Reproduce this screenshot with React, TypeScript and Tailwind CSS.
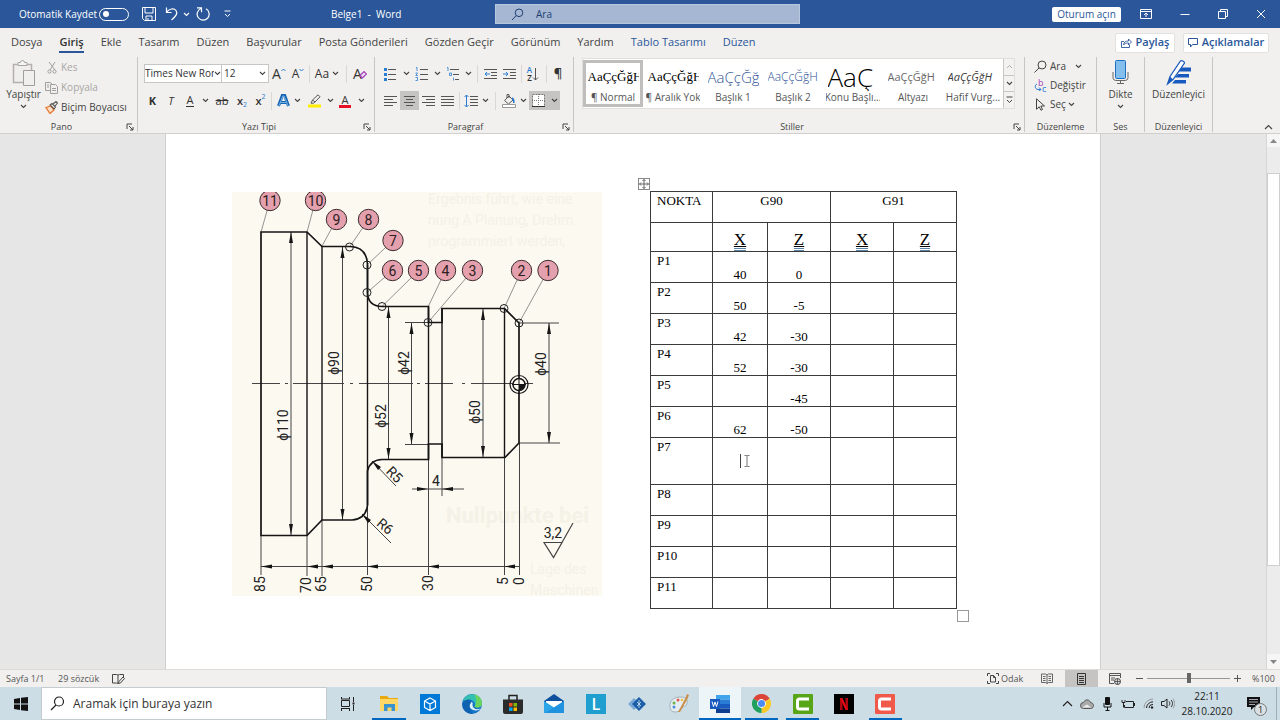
import type { ReactNode } from 'react';

const UI = "font-['Open_Sans','Noto_Sans',sans-serif]";

function Svg({ w, h, children, className = '' }: { w: number; h: number; children: ReactNode; className?: string }) {
  return (
    <svg width={w} height={h} viewBox={`0 0 ${w} ${h}`} fill="none" aria-hidden="true" className={`shrink-0 ${className}`}>
      {children}
    </svg>
  );
}

function Chevron({ color = '#444' }: { color?: string }) {
  return (
    <Svg w={7} h={5}>
      <path d="M1 1l2.500 2.500L6 1" stroke={color} strokeWidth="1.100" />
    </Svg>
  );
}

function Tool({ label, width, children, active = false }: { label: string; width: string; children: ReactNode; active?: boolean }) {
  return (
    <button
      type="button"
      aria-label={label}
      className={`flex h-[19px] shrink-0 items-center justify-center leading-none text-[#333] ${width} ${active ? 'bg-[#c6c4c2]' : ''}`}
    >
      {children}
    </button>
  );
}

function Sep({ width }: { width: string }) {
  return (
    <span className={`flex shrink-0 justify-center ${width}`}>
      <span className="h-[18px] w-px bg-[#dad8d6]" />
    </span>
  );
}

function Launcher({ label }: { label: string }) {
  return (
    <button type="button" aria-label={label} className="absolute right-[3px] bottom-px">
      <Svg w={8} h={8}>
        <path d="M1 6V1h5M3 3l4 4M7 4v3H4" stroke="#444" />
      </Svg>
    </button>
  );
}

function Group({ name, width, launcher = false, children }: { name: string; width: string; launcher?: boolean; children: ReactNode }) {
  return (
    <section aria-label={name} className={`relative flex h-[75px] shrink-0 flex-col border-r border-[#c8c6c4] ${width}`}>
      <div className="h-[65px] shrink-0">{children}</div>
      <div className="h-[10px] shrink-0 text-center text-[9px] leading-[10px] whitespace-nowrap text-[#444]">{name}</div>
      {launcher && <Launcher label={`${name} ayarları`} />}
    </section>
  );
}

function TitleBar() {
  return (
    <header className="flex h-7 shrink-0 items-center bg-[#2b579a] text-[10px] text-white">
      <div className="flex w-[331px] shrink-0 items-center pl-[19px]">
        <label className="flex w-[110px] items-center justify-between whitespace-nowrap">
          Otomatik Kaydet
          <input type="checkbox" className="peer sr-only" />
          <span className="flex h-[13px] w-[30px] items-center rounded-full border border-white pl-[3px]">
            <span className="size-[6px] rounded-full bg-white" />
          </span>
        </label>
        <button type="button" aria-label="Kaydet" className="ml-[13px]">
          <Svg w={14} h={14}>
            <path d="M.5 .5h13v13h-11l-2-2zM3 .5v5.500h8V.5M4 13.500V9h6v4.500M6 11v2.500" stroke="#fff" />
          </Svg>
        </button>
        <button type="button" aria-label="Geri Al" className="ml-[9px]">
          <Svg w={14} h={14}>
            <path d="M1.500 .5v5h5M1.500 5.500C4 1.500 9 .8 11 3.500c2 3 0 5.500-4.500 9.500" stroke="#fff" strokeWidth="1.200" />
          </Svg>
        </button>
        <span className="ml-[4px]"><Chevron color="#fff" /></span>
        <button type="button" aria-label="Yinele" className="ml-[6px]">
          <Svg w={15} h={14}>
            <path d="M1 .8h4.500v4.500M5 1.500a6 6 0 1 0 5 .3" stroke="#fff" strokeWidth="1.200" />
          </Svg>
        </button>
        <button type="button" aria-label="Hızlı Erişim Araç Çubuğunu Özelleştir" className="ml-[13px]">
          <Svg w={7} h={8}>
            <path d="M.5 1h6M1 4l2.500 2.500L6 4" stroke="#fff" />
          </Svg>
        </button>
      </div>
      <h1 className="w-[164px] shrink-0 whitespace-pre">Belge1  -  Word</h1>
      <label className="flex h-5 w-[305px] items-center border border-[#b7c7de] bg-[#a5b7d3] pl-[15px] text-[#1e3f73]">
        <Svg w={13} h={13}>
          <circle cx="8" cy="4.800" r="3.800" stroke="#1e3f73" />
          <path d="M5.300 7.500L1 12" stroke="#1e3f73" />
        </Svg>
        <input aria-label="Ara" placeholder="Ara" className="ml-3 w-full bg-transparent placeholder:text-[#1e3f73] outline-none" />
      </label>
      <div className="flex flex-1 items-center justify-end pr-[14px]">
        <button type="button" className="h-[15px] w-[69px] rounded-xs bg-white text-[10px] leading-[14px] text-[#2b579a]">Oturum açın</button>
        <button type="button" aria-label="Şerit Görüntüleme Seçenekleri" className="ml-[19px]">
          <Svg w={12} h={10}>
            <path d="M.5 .5h11v9H.500zM.5 2.500h11M6 8V4.500M4 6l2-2 2 2" stroke="#fff" />
          </Svg>
        </button>
        <button type="button" aria-label="Simge Durumuna Küçült" className="ml-7">
          <Svg w={10} h={10}><path d="M.5 5.500h9" stroke="#fff" /></Svg>
        </button>
        <button type="button" aria-label="Geri Yükle" className="ml-7">
          <Svg w={10} h={10}><path d="M.5 2.500h7v7h-7zM2.500 2.500v-2h7v7h-2" stroke="#fff" /></Svg>
        </button>
        <button type="button" aria-label="Kapat" className="ml-7">
          <Svg w={10} h={10}><path d="M1 1l8 8M9 1L1 9" stroke="#fff" /></Svg>
        </button>
      </div>
    </header>
  );
}

const tabs = ['Dosya', 'Giriş', 'Ekle', 'Tasarım', 'Düzen', 'Başvurular', 'Posta Gönderileri', 'Gözden Geçir', 'Görünüm', 'Yardım', 'Tablo Tasarımı', 'Düzen'];

function Tabs() {
  return (
    <nav className="flex h-[29px] shrink-0 items-center gap-[17px] pr-[11px] pl-[11px] text-[11px] text-[#444]">
      {tabs.map((t, i) => (
        <button
          key={i}
          type="button"
          className={
            'h-[21px] border-b-2 leading-[18px] whitespace-nowrap ' +
            (i === 1 ? 'border-[#2b579a] font-semibold text-[#333]' : i > 9 ? 'border-transparent text-[#2b579a]' : 'border-transparent')
          }
        >
          {t}
        </button>
      ))}
      <div className="ml-auto flex gap-2 font-semibold text-[#2b579a]">
        <button type="button" className="flex h-5 w-[60px] items-center justify-center gap-1 rounded-xs border border-[#e3e1df] bg-white">
          <Svg w={11} h={10}>
            <path d="M3 3.500H.500v6h8V7M2.500 7c.500-3 2-4 5-4V1l3 3-3 3V5c-2.500 0-4 .5-5 2z" stroke="#2b579a" strokeWidth=".9" />
          </Svg>
          Paylaş
        </button>
        <button type="button" className="flex h-5 w-[86px] items-center justify-center gap-1 rounded-xs border border-[#e3e1df] bg-white">
          <Svg w={10} h={10}>
            <path d="M.5 .5h9v6H4.500l-2 2.500V6.500h-2z" stroke="#2b579a" />
          </Svg>
          Açıklamalar
        </button>
      </div>
    </nav>
  );
}

function Clipboard() {
  return (
    <Group name="Pano" width="w-[138px] pr-[14px]" launcher>
      <div className="flex">
        <button type="button" className="flex w-[47px] shrink-0 flex-col items-center pt-[3px] text-[10px] text-[#444]">
          <Svg w={24} h={27}>
            <path d="M1.500 4.500h18v18h-18z" stroke="#b3b0ad" strokeWidth="1.500" fill="#efeeec" />
            <path d="M6 5.500h9v-3h-2.500a2 2 0 0 0-4 0H6z" fill="#f5f4f2" stroke="#a8a6a4" />
            <path d="M11.500 10.500h11v15h-11z" fill="#f1efed" stroke="#a19f9d" />
          </Svg>
          <span className="leading-[14px]">Yapıştır</span>
          <span className="mt-[3px]"><Chevron /></span>
        </button>
        <div className="text-[10px] whitespace-nowrap text-[#a8a6a4]">
          <button type="button" className="flex h-5 items-center">
            <Svg w={14} h={13}>
              <path d="M2 1l6 8M8 1L3 9" stroke="#a19f9d" />
              <circle cx="2.500" cy="10.500" r="1.600" stroke="#a19f9d" />
              <circle cx="7.500" cy="10.500" r="1.600" stroke="#a19f9d" />
            </Svg>
            Kes
          </button>
          <button type="button" className="flex h-5 items-center">
            <Svg w={13} h={13} className="-ml-[2px] mr-[3px]">
              <path d="M5 9.500H.500v-8h5l1.500 1.500M5.500 3.500h5l2 2v7h-7zM7 7.500h4M7 9.500h4M2 4h2M2 6h2" stroke="#a19f9d" />
            </Svg>
            Kopyala
          </button>
          <button type="button" className="flex h-5 items-center text-[#444]">
            <Svg w={13} h={13} className="-ml-[2px] mr-[3px]">
              <path d="M1 6.500l5-1.500 3 4-4 3.500z" stroke="#e8762d" strokeWidth="1.300" fill="#fbe0c8" />
              <path d="M5 4l2-1.500L10.500 6 9 8zM8 3l3-2.500 1.500 1.500L10 5" stroke="#555" strokeWidth="1.100" />
            </Svg>
            Biçim Boyacısı
          </button>
        </div>
      </div>
    </Group>
  );
}

function FontGroup() {
  return (
    <Group name="Yazı Tipi" width="w-[237px] pl-[6px]" launcher>
      <div className="flex h-[30px] items-center pt-[3px]">
        <span className="flex h-[19px] w-[78px] shrink-0 items-center border border-[#c8c6c4] bg-white pr-[2px]">
          <select aria-label="Yazı tipi" className="w-[69px] appearance-none overflow-hidden text-[10px] text-[#333] outline-none">
            <option>Times New Roman</option>
          </select>
          <Chevron />
        </span>
        <span className="-ml-px flex h-[19px] w-[48px] shrink-0 items-center border border-[#c8c6c4] bg-white pr-[2px] pl-[2px]">
          <select aria-label="Yazı tipi boyutu" className="w-[37px] appearance-none text-[10px] text-[#333] outline-none">
            <option>12</option>
          </select>
          <Chevron />
        </span>
        <Tool label="Yazı tipini büyüt" width="w-5">
          <span className="text-[14px]">A</span>
          <Svg w={5} h={12}><path d="M.5 3l2-2 2 2" stroke="#2b7cd3" /></Svg>
        </Tool>
        <Tool label="Yazı tipini küçült" width="w-[18px]">
          <span className="text-[12px]">A</span>
          <Svg w={5} h={12}><path d="M.5 1l2 2 2-2" stroke="#2b7cd3" /></Svg>
        </Tool>
        <Sep width="w-1" />
        <Tool label="Büyük küçük harf" width="w-[32px]">
          <span className="mr-[3px] text-[12px]">Aa</span>
          <Chevron />
        </Tool>
        <Sep width="w-[6px]" />
        <Tool label="Biçimlendirmeyi temizle" width="w-[22px]">
          <span className="text-[14px]">A</span>
          <Svg w={8} h={13} className="-ml-[3px]">
            <path d="M1 8.500l4-4 2.500 2.500-4 4z" stroke="#a33fb5" strokeWidth="1.200" fill="#f0dcf4" />
          </Svg>
        </Tool>
      </div>
      <div className="flex h-[27px] items-center">
        <Tool label="Kalın" width="w-[17px]"><span className="text-[11px] font-bold">K</span></Tool>
        <Tool label="İtalik" width="w-5"><span className="text-[11px] italic">T</span></Tool>
        <Tool label="Altı çizili" width="w-[18px]"><span className="border-b border-[#333] px-px text-[11px] leading-[12px]">A</span></Tool>
        <Tool label="Altı çizili seçenekleri" width="w-3"><Chevron /></Tool>
        <Tool label="Üstü çizili" width="w-[22px]"><span className="text-[11px] line-through">ab</span></Tool>
        <Tool label="Alt simge" width="w-[18px]">
          <span className="text-[11px] font-semibold">x</span><span className="pt-2 text-[7px] text-[#2b7cd3]">2</span>
        </Tool>
        <Tool label="Üst simge" width="w-[19px]">
          <span className="text-[11px] font-semibold">x</span><span className="pb-2 text-[7px] text-[#2b7cd3]">2</span>
        </Tool>
        <Sep width="w-[3px]" />
        <Tool label="Metin efektleri" width="w-5">
          <Svg w={13} h={13}>
            <path d="M1.500 12L5.300 1.500h2.400L11.500 12M3.500 8.500h6" stroke="#1464b4" strokeWidth="3" />
            <path d="M1.800 12L5.900 2h1.200l4.100 10M3.500 8.500h6" stroke="#9fd0f5" strokeWidth=".7" />
          </Svg>
        </Tool>
        <Tool label="Metin efekti seçenekleri" width="w-2"><Chevron /></Tool>
        <Tool label="Vurgu rengi" width="w-[26px]">
          <Svg w={13} h={14}>
            <path d="M4.500 6L10 .8l2 2L7 8zM4.500 6L3 9.200h2.500L7 8" stroke="#555" />
            <path d="M0 10.500h13v3H0z" fill="#ffee00" />
          </Svg>
        </Tool>
        <Tool label="Vurgu seçenekleri" width="w-[6px]"><Chevron /></Tool>
        <Tool label="Yazı tipi rengi" width="w-6">
          <span className="border-b-[3px] border-[#e81123] px-[3px] text-[11px] leading-[11px]">A</span>
        </Tool>
        <Tool label="Yazı rengi seçenekleri" width="w-2"><Chevron /></Tool>
      </div>
    </Group>
  );
}

function Paragraph() {
  const g = '#555';
  const b = '#2b7cd3';
  return (
    <Group name="Paragraf" width="w-[199px] pl-[5px] pr-[22px]" launcher>
      <div className="flex h-[30px] items-center pt-[3px]">
        <Tool label="Madde işaretleri" width="w-5">
          <Svg w={14} h={14}><path d="M5 2.500h8M5 7.500h8M5 12.500h8" stroke={g} /><path d="M1 1h3v3H1zM1 6h3v3H1zM1 11h3v3H1z" fill={b} /></Svg>
        </Tool>
        <Tool label="Madde seçenekleri" width="w-3"><Chevron /></Tool>
        <Tool label="Numaralandırma" width="w-5">
          <Svg w={14} h={14}><path d="M5 2.500h8M5 7.500h8M5 12.500h8" stroke={g} /><path d="M1 .5h1V4M.5 6h2L.800 8.500H3M.5 10.500h2v3h-2" stroke={b} strokeWidth=".8" /></Svg>
        </Tool>
        <Tool label="Numara seçenekleri" width="w-[10px]"><Chevron /></Tool>
        <Tool label="Çok düzeyli liste" width="w-[22px]">
          <Svg w={14} h={14}><path d="M4 2.500h9M7 7.500h6M9 12.500h4" stroke={g} /><path d="M1 .5h1V4M3.500 6h2v2.500h-2zM7.500 10.500v3" stroke={b} strokeWidth=".8" /></Svg>
        </Tool>
        <Tool label="Liste seçenekleri" width="w-2"><Chevron /></Tool>
        <Sep width="w-[10px]" />
        <Tool label="Girintiyi azalt" width="w-4">
          <Svg w={13} h={12}><path d="M0 1.500h13M7 4.500h6M7 7.500h6M0 10.500h13" stroke={g} /><path d="M6 6H1M3 4L1 6l2 2" stroke={b} /></Svg>
        </Tool>
        <Tool label="Girintiyi artır" width="w-[22px]">
          <Svg w={13} h={12}><path d="M0 1.500h13M7 4.500h6M7 7.500h6M0 10.500h13" stroke={g} /><path d="M0 6h5M3 4l2 2-2 2" stroke={b} /></Svg>
        </Tool>
        <Sep width="w-[2px]" />
        <Tool label="Sırala" width="w-[22px]">
          <span className="flex flex-col text-[8px] leading-[8px] font-semibold"><span className="text-[#2b7cd3]">A</span><span>Z</span></span>
          <Svg w={7} h={14}><path d="M3.500 1v12M1 10.500L3.500 13 6 10.500" stroke={g} /></Svg>
        </Tool>
        <Sep width="w-1" />
        <Tool label="Paragraf işaretleri" width="w-5"><span className="text-[13px] font-semibold">¶</span></Tool>
      </div>
      <div className="flex h-[27px] items-center pl-px">
        <Tool label="Sola hizala" width="w-[19px]"><Svg w={13} h={12}><path d="M0 1.500h13M0 4.500h9M0 7.500h13M0 10.500h9" stroke={g} /></Svg></Tool>
        <Tool label="Ortala" width="w-[19px]" active><Svg w={13} h={12}><path d="M1 1.500h11M3 4.500h7M1 7.500h11M3 10.500h7" stroke={g} /></Svg></Tool>
        <Tool label="Sağa hizala" width="w-[19px]"><Svg w={13} h={12}><path d="M0 1.500h13M4 4.500h9M0 7.500h13M4 10.500h9" stroke={g} /></Svg></Tool>
        <Tool label="İki yana yasla" width="w-[19px]"><Svg w={13} h={12}><path d="M0 1.500h13M0 4.500h13M0 7.500h13M0 10.500h13" stroke={g} /></Svg></Tool>
        <Sep width="w-1" />
        <Tool label="Satır aralığı" width="w-5">
          <Svg w={14} h={14}><path d="M6 2.500h8M6 5.500h8M6 8.500h8M6 11.500h8" stroke={g} /><path d="M2.500 1v12M.5 3l2-2 2 2M.5 11l2 2 2-2" stroke={b} /></Svg>
        </Tool>
        <Tool label="Aralık seçenekleri" width="w-2"><Chevron /></Tool>
        <Sep width="w-3" />
        <Tool label="Gölgelendirme" width="w-4">
          <Svg w={14} h={14}><path d="M2.500 6.500L7 2l4 4-4.500 4zM5 4V.5h2V4" stroke={g} /><path d="M10 4c2 1 2 3 1.800 5" stroke={b} strokeWidth="1.500" /><path d="M.5 10.500h13v3H.500z" fill="#fff" stroke="#999" /></Svg>
        </Tool>
        <Tool label="Gölgelendirme seçenekleri" width="w-3"><Chevron /></Tool>
        <Tool label="Kenarlıklar" width="w-[31px]" active>
          <Svg w={13} h={13} className="mr-[6px]"><path d="M.5 .5h12v12H.500z" fill="#fff" stroke="#777" strokeDasharray="2 1" /><path d="M6.500 0v13M0 6.500h13" stroke="#777" strokeDasharray="1 1" /><path d="M0 12.500h13" stroke="#333" /></Svg>
          <Chevron />
        </Tool>
      </div>
    </Group>
  );
}

const styles = [
  { name: '¶ Normal', sample: 'AaÇçĞğH', cls: "font-['Liberation_Serif',serif] text-[13px] text-black" },
  { name: '¶ Aralık Yok', sample: 'AaÇçĞğH', cls: "font-['Liberation_Serif',serif] text-[13px] text-black" },
  { name: 'Başlık 1', sample: 'AaÇçĞğ', cls: 'font-light text-[15px] text-[#2f5496]' },
  { name: 'Başlık 2', sample: 'AaÇçĞğH', cls: 'font-light text-[12px] text-[#2f5496]' },
  { name: 'Konu Başlı...', sample: 'AaÇ', cls: 'font-light text-[26px] leading-[28px] text-black' },
  { name: 'Altyazı', sample: 'AaÇçĞğH', cls: 'text-[11px] text-[#6a6a6a]' },
  { name: 'Hafif Vurg...', sample: 'AaÇçĞğH', cls: 'text-[11px] italic text-[#404040]' },
];

function Styles() {
  return (
    <Group name="Stiller" width="w-[451px] pl-[8px] pr-[22px]" launcher>
      <div className="pt-px">
        <div className="flex h-[51px] w-[433px] border border-[#e1dfdd] bg-white">
          {styles.map((s, i) => (
            <button
              key={s.name}
              type="button"
              className={`mt-px flex h-[47px] w-[60px] shrink-0 flex-col overflow-hidden border-[3px] ${i === 0 ? 'border-[#c0bebc]' : 'border-transparent'}`}
            >
              <span className={`flex h-[28px] w-[51px] items-center self-center overflow-hidden whitespace-nowrap ${s.cls}`}>{s.sample}</span>
              <span className="-mx-1 self-center text-[10px] leading-[12px] whitespace-nowrap text-[#555]">{s.name}</span>
            </button>
          ))}
          <div className="flex flex-1 flex-col divide-y divide-[#c8c6c4] border-l border-[#c8c6c4] bg-[#f3f2f1]">
            <button type="button" aria-label="Yukarı" className="flex flex-1 items-center justify-center">
              <Svg w={7} h={5}><path d="M1 4l2.500-2.500L6 4" stroke="#b0aeac" /></Svg>
            </button>
            <button type="button" aria-label="Aşağı" className="flex flex-1 items-center justify-center"><Chevron /></button>
            <button type="button" aria-label="Diğer" className="flex flex-1 items-center justify-center">
              <Svg w={7} h={8}><path d="M.5 1h6M1 4l2.500 2.500L6 4" stroke="#444" /></Svg>
            </button>
          </div>
        </div>
      </div>
    </Group>
  );
}

function Ribbon() {
  return (
    <div className="flex h-[77px] shrink-0 border-b border-[#d2d0ce] text-[#444]">
      <Clipboard />
      <FontGroup />
      <Paragraph />
      <Styles />
      <Group name="Düzenleme" width="w-[72px]">
        <div className="text-[10px]">
          <button type="button" className="flex h-[19px] items-center pl-[9px]">
            <Svg w={13} h={13} className="mr-[3px]"><circle cx="8" cy="5" r="4" stroke="#444" /><path d="M5 8l-4.500 4.500" stroke="#444" /></Svg>
            <span className="mr-2 w-[17px] text-left">Ara</span><Chevron />
          </button>
          <button type="button" className="flex h-[19px] items-center pl-[9px]">
            <span className="relative mr-[3px] h-[14px] w-[13px] text-[9px] leading-none">
              <span className="absolute -top-px left-1 text-[#a33fb5]">b</span>
              <span className="absolute top-[5px] left-2 text-[#2b7cd3]">c</span>
              <Svg w={8} h={12}><path d="M3 5C.5 6 .5 10 4 10.500h3M5 8.500l2 2-2 1.500" stroke="#2b7cd3" /></Svg>
            </span>
            Değiştir
          </button>
          <button type="button" className="flex h-[19px] items-center pl-[9px]">
            <Svg w={13} h={13} className="mr-[3px]"><path d="M2.500 .8v10.500l2.700-2.500 1.800 3.500 1.500-.8L6.800 8h3.700z" stroke="#444" /></Svg>
            <span className="mr-[2px]">Seç</span><Chevron />
          </button>
        </div>
      </Group>
      <Group name="Ses" width="w-[48px]">
        <button type="button" className="flex w-full flex-col items-center pt-[3px] text-[10px]">
          <Svg w={17} h={27}>
            <rect x="3.500" y=".5" width="10" height="18" rx="1" fill="#83beec" stroke="#1e6fc0" />
            <path d="M1 12v5.500c0 2.500 1.500 3 4 3h7c2.500 0 4-.5 4-3V12M8.500 20.500v3M5 23.500h7" stroke="#666" />
          </Svg>
          <span className="leading-[14px]">Dikte</span>
          <span className="mt-[3px]"><Chevron /></span>
        </button>
      </Group>
      <Group name="Düzenleyici" width="w-[68px]">
        <button type="button" className="flex w-full flex-col items-center pt-[3px] text-[10px]">
          <Svg w={26} h={27}>
            <path d="M16 7.500h9v4H12zM12 14h11v3.500H9zM9 20h11v3.500H6z" fill="#185abd" />
            <path d="M1.500 24L4 16.500 14.500 1c1-1 4 .5 4 2L7 19.500z" fill="#fff" stroke="#185abd" strokeWidth="1.200" />
            <path d="M4 16.500l3 3L1.500 24z" fill="#185abd" />
          </Svg>
          <span className="leading-[14px]">Düzenleyici</span>
        </button>
      </Group>
      <button type="button" aria-label="Şeridi Daralt" className="mt-auto mr-[7px] mb-[3px] ml-auto">
        <Svg w={9} h={6}><path d="M1 5l3.500-3.500L8 5" stroke="#444" strokeWidth="1.200" /></Svg>
      </button>
    </div>
  );
}

const balloons = [
  { n: 11, x: 270, y: 200.5, tx: 261, ty: 232 },
  { n: 10, x: 315.5, y: 200.5, tx: 307, ty: 232 },
  { n: 9, x: 336.5, y: 219.5, tx: 322, ty: 246 },
  { n: 8, x: 368.5, y: 219.5, tx: 349.5, ty: 247 },
  { n: 7, x: 393, y: 240.5, tx: 367, ty: 265 },
  { n: 6, x: 392.5, y: 270.5, tx: 367, ty: 292.5 },
  { n: 5, x: 418.5, y: 270.5, tx: 382, ty: 306.5 },
  { n: 4, x: 445.5, y: 270.5, tx: 428, ty: 307 },
  { n: 3, x: 472.5, y: 270.5, tx: 428, ty: 322.5 },
  { n: 2, x: 521.5, y: 270.5, tx: 504, ty: 308.5 },
  { n: 1, x: 548, y: 270.5, tx: 519, ty: 323 },
];

const rings = [[349.5, 247], [367, 265], [367, 292.5], [382, 306.5], [428, 322.5], [504, 308.5], [519, 323]];

const verticals = [
  { x: 291, a: 232, b: 535 },
  { x: 342.5, a: 247, b: 520 },
  { x: 388.5, a: 307, b: 459 },
  { x: 411.5, a: 323, b: 444 },
  { x: 483, a: 309, b: 457 },
  { x: 549, a: 323, b: 443 },
];

const turned = [
  { t: 'ϕ110', x: 288, y: 425 },
  { t: 'ϕ90', x: 339, y: 363 },
  { t: 'ϕ42', x: 409, y: 363 },
  { t: 'ϕ52', x: 386, y: 416 },
  { t: 'ϕ50', x: 480, y: 412 },
  { t: 'ϕ40', x: 546, y: 364 },
  { t: '85', x: 265, y: 584 },
  { t: '70', x: 311, y: 585 },
  { t: '65', x: 326, y: 584 },
  { t: '50', x: 372, y: 584 },
  { t: '30', x: 433, y: 583 },
  { t: '5', x: 508, y: 581 },
  { t: '0', x: 524, y: 581 },
];

function Drawing() {
  return (
    <svg
      width="370"
      height="404"
      viewBox="232 192 370 404"
      role="img"
      aria-label="Torna parçası teknik resmi"
      className="shrink-0 bg-[#fcf9f0] font-[Roboto,sans-serif]"
      fill="none"
    >
      <g fill="#f4f1e7" fontSize="14">
        <text x="428" y="204">Ergebnis führt, wie eine</text>
        <text x="428" y="225">nung A Planung, Drehm</text>
        <text x="428" y="246">programmiert werden,</text>
        <text x="446" y="523" fontSize="22" fontWeight="700">Nullpunkte bei</text>
        <text x="530" y="574">Lage des</text>
        <text x="530" y="595">Maschinen</text>
      </g>
      <g stroke="#777" strokeWidth=".8">
        {balloons.map((b) => <path key={b.n} d={`M${b.x} ${b.y}L${b.tx} ${b.ty}`} />)}
      </g>
      <g stroke="#444" strokeWidth="1">
        <path d="M261 535V575M307 535V576M322 520V576M367.500 505V575M428.500 459V575M442 457V496M504.500 457V575M519.500 443V575" />
        <path d="M261 566.500H519M405 322.500H428M405 444.500H428M519 323H559M519 443H560M412 489H464" />
        <path d="M252 383.500h28m5 0h3m5 0h51m6 0h3m6 0h54m4 0h3m5 0h28m9 0h3m6 0h62" />
        <path d="M396 486L372 461M391 543L362 514" />
        <path d="M544 542.500h18l-8.500 15zM553.500 557.500L573 523" strokeWidth="1.200" />
        {verticals.map((v) => <path key={v.x} d={`M${v.x} ${v.a}V${v.b}`} />)}
      </g>
      <g stroke="#151515" strokeWidth="1.700">
        <path d="M261 232H307L322 246.500H350Q367 247 367.500 265V293Q368 306 382 306.500H428.500V322.500H442V308.500H504.500L519 323V443L505 457.500H442V444H428.500V459.500H382Q370 460 367.500 471V505Q366 519 352 520H322L307 535.500H261Z" />
        <path d="M307 232V535M322 246V520M367.500 265V505M428.500 307V459M442 308V457M504.500 308V457" strokeWidth="1.400" />
      </g>
      <g fill="#151515">
        {verticals.map((v) => (
          <path key={v.x} d={`M${v.x} ${v.a}l-2 11h4zM${v.x} ${v.b}l-2 -11h4z`} />
        ))}
        {[261, 307, 322, 367, 428, 504, 442].map((x) => (
          <path key={x} d={`M${x} ${x === 442 ? 489 : 566.5}l11 -2v4z`} />
        ))}
        <path d="M428 489l-11 -2v4zM372 461l9 6-3 3zM362 514l9 6-3 3z" />
      </g>
      <g stroke="#222" strokeWidth="1">
        {rings.map(([x, y]) => <circle key={`${x}-${y}`} cx={x} cy={y} r="4" />)}
      </g>
      {balloons.map((b) => (
        <g key={b.n}>
          <circle cx={b.x} cy={b.y} r="10.200" fill="#e5a0ad" stroke="#3b2b2e" />
          <text x={b.x} y={b.y + 5} textAnchor="middle" fontSize="14" fill="#2c2022">{b.n}</text>
        </g>
      ))}
      <circle cx="519" cy="384.500" r="9" stroke="#151515" strokeWidth="1.200" />
      <circle cx="519" cy="384.500" r="6" stroke="#151515" strokeWidth="1.500" fill="#fcf9f0" />
      <path d="M519 384.500h6a6 6 0 0 1-6 6z" fill="#151515" />
      <path d="M512 384.500h14M519 378v13" stroke="#151515" strokeWidth="1" />
      <g fill="#222" fontSize="14" textAnchor="middle">
        {turned.map((d) => (
          <text key={d.t} x={d.x} y={d.y} transform={`rotate(-90 ${d.x} ${d.y})`}>{d.t}</text>
        ))}
        <text x="436" y="486">4</text>
        <text x="553" y="538">3,2</text>
        <text x="391" y="478" transform="rotate(45 391 478)">R5</text>
        <text x="382" y="530" transform="rotate(40 382 530)">R6</text>
      </g>
    </svg>
  );
}

const rows = [
  ['P1', '40', '0'], ['P2', '50', '-5'], ['P3', '42', '-30'], ['P4', '52', '-30'], ['P5', '', '-45'], ['P6', '62', '-50'],
  ['P7', '', ''], ['P8', '', ''], ['P9', '', ''], ['P10', '', ''], ['P11', '', ''],
];

function Axis({ children }: { children: string }) {
  return (
    <span className="inline-block border-b-3 border-double border-[#5b83a8] text-[17px] leading-[16px] underline decoration-1 underline-offset-1">{children}</span>
  );
}

function PointTable() {
  const cell = 'border border-[#3a3a3a] p-0 font-normal';
  return (
    <div className="relative shrink-0">
      <span className="absolute -top-[13px] -left-[12px] flex size-3 items-center justify-center border border-[#8a8a8a] bg-white">
        <Svg w={10} h={10}>
          <path d="M5 .5v9M.5 5h9M3.500 2L5 .5 6.500 2M3.500 8L5 9.500 6.500 8M2 3.500L.500 5 2 6.500M8 3.500L9.500 5 8 6.500" stroke="#444" strokeWidth=".8" />
        </Svg>
      </span>
      <table className="w-[306px] table-fixed border-collapse text-center font-['Liberation_Serif',serif] text-[13px] leading-[15px] text-black">
        <colgroup>
          <col className="w-[62px]" />
          <col className="w-[55px]" />
          <col className="w-[63px]" />
          <col className="w-[63px]" />
          <col className="w-[63px]" />
        </colgroup>
        <thead>
          <tr className="h-[31px] align-top">
            <th className={`${cell} pt-px pl-[6px] text-left`}>NOKTA</th>
            <th colSpan={2} className={`${cell} pt-px`}>G90</th>
            <th colSpan={2} className={`${cell} pt-px`}>G91</th>
          </tr>
          <tr className="h-[29px] align-bottom">
            <th className={cell} />
            {['X', 'Z', 'X', 'Z'].map((a, i) => (
              <th key={i} className={cell}><Axis>{a}</Axis></th>
            ))}
          </tr>
        </thead>
        <tbody>
          {rows.map(([p, x, z]) => (
            <tr key={p} className={p === 'P7' ? 'h-[47px]' : 'h-[31px]'}>
              <th scope="row" className={`${cell} pt-px pl-[6px] text-left align-top`}>{p}</th>
              <td className={`${cell} ${p === 'P7' ? 'align-middle' : 'align-bottom'}`}>
                {p === 'P7' ? (
                  <span className="ml-[27px] flex items-center gap-[3px]">
                    <span className="h-[14px] w-px bg-[#444]" />
                    <Svg w={6} h={12}><path d="M.5 .5h2l.5.5.5-.5h2M.5 11.500h2l.5-.5.5.5h2M3 1v10" stroke="#666" strokeWidth=".9" /></Svg>
                  </span>
                ) : x}
              </td>
              <td className={`${cell} align-bottom`}>{z}</td>
              <td className={cell} />
              <td className={cell} />
            </tr>
          ))}
        </tbody>
      </table>
      <span className="absolute -right-[12px] -bottom-[13px] size-3 border border-[#999] bg-white" />
    </div>
  );
}

function DocumentArea() {
  return (
    <main className="flex min-h-[535px] flex-1 bg-[#e6e6e6]">
      <div className="flex flex-1 justify-center">
        <article className="flex w-[936px] items-start border-x border-[#cfcfcf] bg-white pt-[57px] pl-[66px]">
          <div className="pt-px"><Drawing /></div>
          <div className="ml-[48px]"><PointTable /></div>
        </article>
      </div>
      <div className="flex w-[14px] flex-col items-center border-l border-[#d6d6d6] bg-[#ececec]">
        <button type="button" aria-label="Yukarı kaydır" className="flex h-[13px] w-full items-center justify-center bg-[#f6f6f6]">
          <Svg w={7} h={4}><path d="M0 4h7L3.500 0z" fill="#888" /></Svg>
        </button>
        <div className="mt-[26px] h-[393px] w-full border border-[#cfcfcf] bg-white" />
        <button type="button" aria-label="Aşağı kaydır" className="mt-auto flex h-[15px] w-full items-center justify-center bg-[#f6f6f6]">
          <Svg w={7} h={4}><path d="M0 0h7L3.500 4z" fill="#888" /></Svg>
        </button>
      </div>
    </main>
  );
}

function StatusBar() {
  return (
    <footer className="flex h-[18px] shrink-0 items-center border-t border-[#dddbd9] bg-[#f1f0ee] pr-[6px] pl-[6px] text-[9px] whitespace-nowrap text-[#555]">
      <span className="w-[52px]">Sayfa 1/1</span>
      <span className="w-[54px]">29 sözcük</span>
      <button type="button" aria-label="Yazım denetimi">
        <Svg w={13} h={12}><path d="M6 10.500V2L4.500 1.500h-4v8.500H4.500zM6 2l1.500-.5h4V4M6.500 10.500l.5-2L11 4l1.500 1.500-4 4.500z" stroke="#444" /></Svg>
      </button>
      <button type="button" className="ml-auto flex w-[54px] items-center gap-[2px]">
        <Svg w={12} h={11}><path d="M.5 3V.5H3M9 .5h2.500V3M.5 8v2.500H3M9 10.500h2.500V8M3.500 2.500h3l2 2v4.500h-5zM6.500 2.500v2h2" stroke="#444" /></Svg>
        Odak
      </button>
      <button type="button" aria-label="Okuma modu" className="flex h-full w-[18px] items-center">
        <Svg w={12} h={11}><path d="M.5 1h4l1.500 1 1.500-1h4v8.500h-4l-1.500 1-1.500-1h-4zM6 2v8.500M2 3.500h2.500M2 5.500h2.500M2 7.500h2.500M7.500 3.500H10M7.500 5.500H10M7.500 7.500H10" stroke="#555" strokeWidth=".9" /></Svg>
      </button>
      <button type="button" aria-label="Yazdırma düzeni" className="ml-[6px] flex h-[17px] w-[33px] items-center justify-center bg-[#c6c4c2]">
        <Svg w={9} h={12}><path d="M.5 .5h8v11h-8zM2 3.500h5M2 5.500h5M2 7.500h5M2 9.500h5" stroke="#333" /></Svg>
      </button>
      <button type="button" aria-label="Web düzeni" className="flex w-[34px] items-center justify-center">
        <Svg w={12} h={12}><path d="M5 10.500H.500V.5h11V5M.5 2.500h11M2 5h4M2 7h3" stroke="#555" /><circle cx="8.500" cy="8.500" r="3" fill="#ddd" stroke="#444" /><path d="M8.500 5.500v6M5.500 8.500h6" stroke="#444" strokeWidth=".8" /></Svg>
      </button>
      <button type="button" aria-label="Uzaklaştır" className="flex w-[11px] justify-end">
        <Svg w={7} h={7}><path d="M0 3.500h7" stroke="#555" /></Svg>
      </button>
      <input
        type="range"
        aria-label="Yakınlaştırma"
        className="mx-1 h-[12px] w-[83px] appearance-none bg-transparent [&::-webkit-slider-runnable-track]:h-px [&::-webkit-slider-runnable-track]:bg-[#9a9896] [&::-webkit-slider-thumb]:-mt-[5px] [&::-webkit-slider-thumb]:h-[10px] [&::-webkit-slider-thumb]:w-[4px] [&::-webkit-slider-thumb]:appearance-none [&::-webkit-slider-thumb]:bg-[#666]"
      />
      <button type="button" aria-label="Yakınlaştır" className="w-[18px]">
        <Svg w={7} h={7}><path d="M0 3.500h7M3.500 0v7" stroke="#555" /></Svg>
      </button>
      <span className="w-[22px]">%100</span>
    </footer>
  );
}

const apps: { name: string; open?: boolean; active?: boolean; icon: ReactNode }[] = [
  { name: 'Görev görünümü', icon: <Svg w={15} h={14}><path d="M1.500 0v2M9.500 0v2M1.500 3.500h8v6h-8zM1.500 11v3M9.500 11v3M1 2h9M1 11.500h9M13.500 0v5M13.500 8v6" stroke="#222" /><path d="M12.500 5.500h2v2h-2z" fill="#222" /></Svg> },
  { name: 'Dosya Gezgini', open: true, icon: <Svg w={19} h={17}><path d="M0 1h7l2 2h9v11H0z" fill="#e8a90f" /><path d="M0 4h18v12H0z" fill="#ffd766" /><path d="M4 9h11v7h-3.500v-3.500h-4V16H4z" fill="#3a93d0" /></Svg> },
  { name: '3B Görüntüleyici', icon: <Svg w={20} h={20}><path d="M0 0h20v20H0z" fill="#0078d7" /><path d="M10 4l5.500 3v6.500L10 16.500l-5.500-3V7zM4.500 7l5.500 3 5.500-3M10 10v6.500" stroke="#fff" strokeWidth="1.200" /></Svg> },
  { name: 'Edge', icon: <Svg w={20} h={20}><circle cx="10" cy="10" r="10" fill="#1573c8" /><path d="M1 7C3 1 9-1 14 1c5 2 7 7 5.500 10.500C18 14 14 14 12.500 12.500 15 8 9 4 4 6z" fill="#35c1b1" /><path d="M12 .5c6 1 9 6 7.500 11C18 14 14 14 12.500 12.500 15 9 15 4 12 .5z" fill="#6bd45c" /><path d="M8 8.500c-2 4 1 8 6 8 2 0 3.500-1 4.500-2-4 2-8 0-8-3.500 0-1 .5-2-.5-3z" fill="#dff1f7" /><path d="M1 8c4-4 9-2 8 1-3 3-1 8 2 11C3 20-1 14 1 8z" fill="#0f62b0" /></Svg> },
  { name: 'Microsoft Store', icon: <Svg w={20} h={20}><path d="M6 6V1.500h8V6" stroke="#222" strokeWidth="1.500" /><path d="M0 5.500h20V18a2 2 0 0 1-2 2H2a2 2 0 0 1-2-2z" fill="#2b2b2b" /><path d="M6 9h3.500v3.500H6z" fill="#f25022" /><path d="M10.500 9H14v3.500h-3.500z" fill="#7fba00" /><path d="M6 13.500h3.500V17H6z" fill="#00a4ef" /><path d="M10.500 13.500H14V17h-3.500z" fill="#ffb900" /></Svg> },
  { name: 'Posta', icon: <Svg w={20} h={19}><path d="M0 7l10-7 10 7v12H0z" fill="#0f4f9e" /><path d="M2 7h16v8H2z" fill="#fff" /><path d="M0 7l10 6.500L20 7v12H0z" fill="#29a5e8" /><path d="M20 7v12H1z" fill="#1c86d8" opacity=".6" /></Svg> },
  { name: 'L', icon: <span className="flex size-5 items-center justify-center bg-[#1f9fd0] text-[16px] leading-none font-semibold text-white">L</span> },
  { name: 'Senkronizasyon', icon: <Svg w={18} h={14}><path d="M6 1l6 6-6 6-6-6z" fill="#7aa9d8" /><path d="M11 0l7 7-7 7-7-7z" fill="#1c5fa8" /><path d="M11 3v8M9 5l4 4M13 5L9 9" stroke="#cfe4f7" strokeWidth=".8" /></Svg> },
  { name: 'Paint', icon: <Svg w={20} h={19}><path d="M1 13C0 7 5 3 11 3c6 0 8 3 7 7-1 3-4 2-5 4s-3 4-7 4c-3 0-5-2-5-5z" fill="#e6edf0" stroke="#93a5ad" strokeWidth=".8" /><circle cx="5" cy="9" r="1.500" fill="#6ab04c" /><circle cx="9" cy="6" r="1.500" fill="#e05a4e" /><circle cx="13" cy="6" r="1.300" fill="#f0c040" /><circle cx="5" cy="13" r="1.500" fill="#4a90d9" /><path d="M9 18L16 5l2-5 2 1-2 5-7 12z" fill="#c98f4e" /></Svg> },
  { name: 'Word', open: true, active: true, icon: <Svg w={20} h={18}><path d="M6 0h14v4.500H6z" fill="#41a5ee" /><path d="M6 4.500h14V9H6z" fill="#2b7cd3" /><path d="M6 9h14v4.500H6z" fill="#185abd" /><path d="M6 13.500h14V18H6z" fill="#103f91" /><path d="M0 4h10v10H0z" fill="#185abd" /><path d="M2 6.500L3.500 11.500 5 7l1.500 4.500L8 6.500" stroke="#fff" /></Svg> },
  { name: 'Chrome', open: true, icon: <Svg w={19} h={19}><path d="M9.500 9.500L1.300 4.700a9.500 9.500 0 0 1 16.400 0z" fill="#dc4437" /><path d="M9.500 9.500l8.200-4.800a9.500 9.500 0 0 1-8.200 14.300z" fill="#fbc926" /><path d="M9.500 9.500V19A9.500 9.500 0 0 1 1.300 4.700z" fill="#1fa15d" /><circle cx="9.500" cy="9.500" r="4.400" fill="#fff" /><circle cx="9.500" cy="9.500" r="3.500" fill="#4c8bf5" /></Svg> },
  { name: 'Camtasia', open: true, icon: <Svg w={20} h={20}><rect width="20" height="20" rx="1" fill="#58a618" /><path d="M16 5H6.500C5 5 4.500 5.500 4.500 7v6c0 1.500.5 2 2 2H16" stroke="#fff" strokeWidth="3" /></Svg> },
  { name: 'Netflix', icon: <Svg w={20} h={20}><path d="M0 0h20v20H0z" fill="#000" /><path d="M6 4h2.500v12H6zM11.500 4H14v12h-2.500z" fill="#b1060f" /><path d="M6 4h2.500L14 16h-2.500z" fill="#e50914" /></Svg> },
  { name: 'Camtasia Kaydedici', open: true, icon: <Svg w={20} h={20}><rect width="20" height="20" rx="1" fill="#f0594a" /><path d="M16 5H6.500C5 5 4.500 5.500 4.500 7v6c0 1.500.5 2 2 2H16" stroke="#fff" strokeWidth="3" /></Svg> },
];

function Taskbar() {
  return (
    <div className="flex h-[33px] shrink-0 items-center bg-[#cddde5] text-[#222]">
      <button type="button" aria-label="Başlat" className="flex h-full w-[41px] shrink-0 items-center justify-center">
        <Svg w={14} h={14}><path d="M0 2l6-1v5.500H0zM7 .8L14 0v6.500H7zM0 7.500h6V13l-6-1zM7 7.500h7V14l-7-.8z" fill="#111" /></Svg>
      </button>
      <label className="flex h-full w-[286px] shrink-0 items-center border border-[#c4ccd0] bg-white pl-[8px]">
        <Svg w={15} h={15}><circle cx="9" cy="5.500" r="4.500" stroke="#222" strokeWidth="1.200" /><path d="M6 9l-5 5" stroke="#222" strokeWidth="1.200" /></Svg>
        <input aria-label="Arama" placeholder="Aramak için buraya yazın" className="ml-2 w-full text-[12px] outline-none placeholder:text-[#333]" />
      </label>
      <div className="grid h-full w-[579px] shrink-0 grid-cols-14">
        {apps.map((a) => (
          <button
            key={a.name}
            type="button"
            aria-label={a.name}
            className={`flex items-center justify-center ${a.active ? 'bg-[#eef5f9]' : ''} ${a.open ? 'border-b-2 border-[#0067c0] bg-clip-padding pt-[2px]' : ''} ${a.open && !a.active ? 'mx-1' : ''}`}
          >
            {a.icon}
          </button>
        ))}
      </div>
      <div className="ml-auto flex h-full items-center">
        <button type="button" aria-label="Gizli simgeler" className="flex w-5 justify-center"><Svg w={11} h={7}><path d="M1 6l4.500-4.500L10 6" stroke="#222" strokeWidth="1.200" /></Svg></button>
        <button type="button" aria-label="OneDrive" className="flex w-5 justify-center"><Svg w={14} h={10}><path d="M3.500 9.500a3 3 0 0 1 0-6C5 0 9.500 0 10.500 3.500c4 .5 4 6 0 6z" fill="#aaa" stroke="#555" /><path d="M2 8.500l5-3 4 3z" fill="#eee" /></Svg></button>
        <button type="button" aria-label="Mikrofon" className="flex w-5 justify-center"><Svg w={9} h={14}><rect x="2" width="5" height="8" rx="1" fill="#111" /><path d="M1 6v4h7V6M4.500 10v3M2.500 13.500h4" stroke="#111" /></Svg></button>
        <button type="button" aria-label="Pil" className="flex w-[21px] justify-center"><Svg w={14} h={10}><path d="M5 2.500h7.500v6H3.500V6M13.500 4v3M1 1v2.500h3V1M2.500 3.500v5" stroke="#222" /></Svg></button>
        <button type="button" aria-label="Ağ" className="flex w-5 justify-center"><Svg w={11} h={11}><path d="M1 10A9 9 0 0 1 10 1" stroke="#999" /><path d="M3.500 10A6.500 6.500 0 0 1 10 3.800M6 10a4 4 0 0 1 4-3.700" stroke="#222" /><circle cx="9" cy="9.500" r="1.200" fill="#222" /></Svg></button>
        <button type="button" aria-label="Ses" className="flex w-5 justify-center"><Svg w={14} h={11}><path d="M.5 3.500h2.500L6 1v9L3 7.500H.500zM8 3.500c1 1 1 3 0 4M10 2c2 2 2 5 0 7" stroke="#222" /><path d="M12 .5c2 3 2 7 0 10" stroke="#999" /></Svg></button>
        <div className="w-[58px] text-center text-[10px] leading-[15px] whitespace-nowrap">
          <div>22:11</div>
          <div>28.10.2020</div>
        </div>
        <button type="button" aria-label="Bildirimler" className="relative ml-2 flex w-[32px] pl-[3px]">
          <Svg w={14} h={14}><path d="M0 0h13v10H7l-3 3v-3H0z" fill="#111" /><path d="M2 2.500h9M2 5h9M2 7.500h6" stroke="#ccd" strokeWidth=".8" /></Svg>
          <span className="absolute top-[6px] left-[10px] size-[13px] rounded-full border border-[#777] bg-[#d8e0e4] text-center text-[9px] leading-[11px]">1</span>
        </button>
        <span className="mr-[3px] h-full w-px bg-[#9fb0b8]" />
      </div>
    </div>
  );
}

export default function App() {
  return (
    <div className={`flex min-h-screen flex-col bg-[#f1f0ee] ${UI}`}>
      <TitleBar />
      <Tabs />
      <Ribbon />
      <DocumentArea />
      <StatusBar />
      <Taskbar />
    </div>
  );
}
